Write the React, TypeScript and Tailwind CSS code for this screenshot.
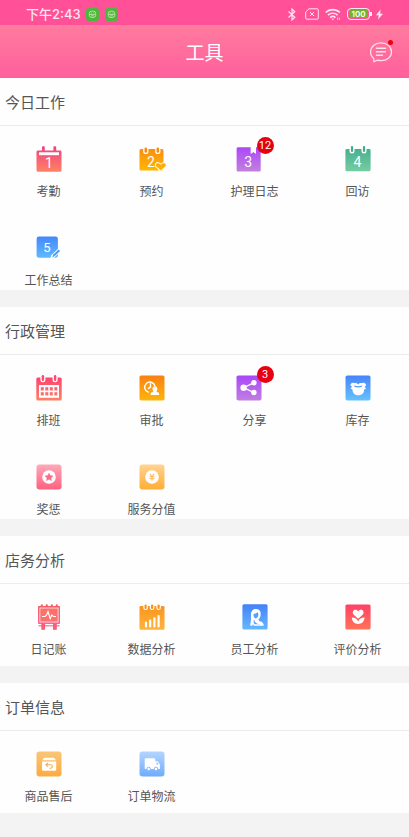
import { ReactNode } from 'react';

interface Tool {
  label: string;
  icon: ReactNode;
  badge?: number;
}

interface Section {
  title: string;
  tools: Tool[];
}

function Icon({ id, from, to, children }: { id: string; from: string; to: string; children: ReactNode }) {
  return (
    <svg viewBox="0 0 26 26" className="h-[26px] w-[26px] overflow-visible" aria-hidden="true">
      <defs>
        <linearGradient id={id} gradientUnits="userSpaceOnUse" x1="0" y1="0" x2="0" y2="26">
          <stop offset="0" stopColor={from} />
          <stop offset="1" stopColor={to} />
        </linearGradient>
      </defs>
      {children}
    </svg>
  );
}

function Digit({ x, y, size = 14, children }: { x: number; y: number; size?: number; children: ReactNode }) {
  return (
    <text x={x} y={y} fontSize={size} textAnchor="middle" fill="#fff" fontFamily="Roboto, sans-serif">
      {children}
    </text>
  );
}

const AttendanceIcon = () => (
  <Icon id="attendance" from="#ee4280" to="#ff8263">
    <path
      fill="url(#attendance)"
      d="M6 1.200c0-.7.5-1 1.400-1s1.400.3 1.400 1v3.300h8.600V1.200c0-.7.5-1 1.400-1s1.400.3 1.400 1v3.300h3.800c.9 0 1.500.6 1.500 1.500v18c0 1.100-.6 1.800-1.600 1.800H2.100C1.100 25.800.5 25.100.5 24V6c0-.9.6-1.500 1.500-1.500h4z"
    />
    <rect x="3" y="6.300" width="20" height="2.900" fill="#fff" />
    <Digit x={13} y={22}>1</Digit>
  </Icon>
);

const BookingIcon = () => (
  <Icon id="booking" from="#f88a14" to="#ffb900">
    <rect x=".5" y="3" width="24" height="21.500" rx="1.500" fill="url(#booking)" />
    <rect x="4.200" y=".4" width="5.200" height="7.600" rx="2.600" fill="#fff" />
    <rect x="16.200" y=".4" width="5.200" height="7.600" rx="2.600" fill="#fff" />
    <rect x="5.500" y="1.500" width="2.600" height="5.200" rx="1.300" fill="#f88a14" />
    <rect x="17.500" y="1.500" width="2.600" height="5.200" rx="1.300" fill="#f88a14" />
    <Digit x={12} y={21}>2</Digit>
    <path
      d="M21.800 24.500l-4.400-3.900c-1.500-1.500-.2-3.900 1.900-3.400 1 .2 1.900.9 2.500 1.600.6-.7 1.500-1.400 2.500-1.600 2.100-.5 3.400 1.900 1.900 3.400z"
      fill="url(#booking)"
      stroke="#fff"
      strokeWidth="2"
      paintOrder="stroke"
    />
  </Icon>
);

const DiaryIcon = () => (
  <Icon id="diary" from="#aa45fa" to="#c381dd">
    <path
      fill="url(#diary)"
      d="M2.200 1.200h12.600v6.500l2.500-1.800 2.500 1.800V1.200h3.500c.9 0 1.400.6 1.400 1.400v21.300c0 1-.6 1.600-1.500 1.600H2.200c-1 0-1.600-.6-1.600-1.600V2.800c0-1 .6-1.600 1.600-1.600z"
    />
    <path fill="#fff" d="M14.800 0h5v7.700l-2.500-1.900-2.500 1.900z" />
    <Digit x={12.300} y={21}>3</Digit>
  </Icon>
);

const VisitIcon = () => (
  <Icon id="visit" from="#3fae8a" to="#78cda4">
    <rect x=".4" y="3" width="25.200" height="22.300" rx="1.500" fill="url(#visit)" />
    <rect x="4.500" y=".4" width="5" height="7.200" rx="2.500" fill="#fff" />
    <rect x="16.500" y=".4" width="5" height="7.200" rx="2.500" fill="#fff" />
    <rect x="5.900" y="0" width="2.200" height="6" rx="1.100" fill="#3fae8a" />
    <rect x="17.900" y="0" width="2.200" height="6" rx="1.100" fill="#3fae8a" />
    <Digit x={12.500} y={21}>4</Digit>
  </Icon>
);

const SummaryIcon = () => (
  <Icon id="summary" from="#4483fa" to="#62c2ff">
    <rect x=".6" y="1.500" width="21.300" height="21.300" rx="2.400" fill="url(#summary)" />
    <Digit x={11} y={17.300} size={13}>5</Digit>
    <path d="M13.500 25l1.900-4.700 7.400-7.200 2.700 2.600-7.500 7z" fill="#fff" />
    <path d="M16.200 22.400l.9-2.600 5.500-5.300 1.500 1.500-5.400 5.100z" fill="#4f9bf8" />
  </Icon>
);

const ScheduleIcon = () => (
  <Icon id="schedule" from="#ff3c70" to="#fd8465">
    <rect x=".3" y="2.600" width="25.400" height="23" rx="1.500" fill="url(#schedule)" />
    <rect x="4.400" y="-.5" width="5" height="7.800" rx="2.500" fill="#fff" />
    <rect x="16.600" y="-.5" width="5" height="7.800" rx="2.500" fill="#fff" />
    <rect x="5.700" y="0" width="2.400" height="6" rx="1.200" fill="#fd4872" />
    <rect x="17.900" y="0" width="2.400" height="6" rx="1.200" fill="#fd4872" />
    <rect x="3" y="10" width="20" height="12.800" fill="#fff" />
    {[12.200, 17.200].map((y) =>
      [4.800, 9.300, 13.800, 18.300].map((x) => (
        <rect key={`${x}-${y}`} x={x} y={y} width="3" height="3.300" fill="url(#schedule)" />
      ))
    )}
  </Icon>
);

const ApprovalIcon = () => (
  <Icon id="approval" from="#f97f12" to="#ffb60a">
    <rect x=".5" y=".4" width="25" height="25.200" rx="1.800" fill="url(#approval)" />
    <path
      d="M9.200 17.200a5.200 5.200 0 1 1 6.700-6.300M11.500 8.800v3.300l-2 1.300"
      fill="none"
      stroke="#fff"
      strokeWidth="1.400"
      strokeLinecap="round"
    />
    <path
      fill="#fff"
      d="M15.900 11.300a2.500 2.500 0 0 1 2.300 3.500c-.4.8-.7 1.200-.5 1.900.2.500.8.700 1.700.9.500.1.700.4.700.8v1.600h-8.400v-1.600c0-.4.300-.7.700-.8.900-.2 1.500-.4 1.700-.9.200-.7-.1-1.100-.5-1.900a2.500 2.500 0 0 1 2.300-3.500z"
    />
  </Icon>
);

const ShareIcon = () => (
  <Icon id="share" from="#aa45fa" to="#c180e0">
    <rect x=".5" y=".4" width="25" height="25.200" rx="1.800" fill="url(#share)" />
    <path d="M17.700 7.800L7.600 12.700l10.100 4.800" fill="none" stroke="#fff" strokeWidth="1.300" />
    <circle cx="7.600" cy="12.700" r="3.200" fill="#fff" />
    <circle cx="17.900" cy="7.800" r="2.700" fill="#fff" />
    <circle cx="17.900" cy="17.500" r="2.700" fill="#fff" />
  </Icon>
);

const StockIcon = () => (
  <Icon id="stock" from="#4683fa" to="#66c3ff">
    <rect x=".5" y=".4" width="25" height="25.200" rx="1.800" fill="url(#stock)" />
    <path
      fill="#fff"
      d="M6.900 7.700l5 .6 1.300 1.200 1.300-1.200 5-.6 1.800 2.300-1.800 1.900 1.700 1.300-2.100 1.600c.1 3.400-2.300 5.500-5.800 5.500s-5.900-2.100-5.700-5.500l-2.200-1.600 1.700-1.300-1.900-1.900z"
    />
    <path d="M8.500 10.500l4.600.7 4.700-.7-1.600 1.500-3.100.4-3.200-.4z" fill="#5299fb" />
  </Icon>
);

const RewardIcon = () => (
  <Icon id="reward" from="#ffaabb" to="#fd5f7e">
    <rect x=".5" y=".4" width="25" height="25.200" rx="3" fill="url(#reward)" />
    <circle cx="13" cy="13" r="6.800" fill="#fff" />
    <path
      d="M13 9.200l1.200 2.400 2.700.4-1.900 1.900.4 2.700-2.400-1.300-2.400 1.300.4-2.700L9.100 12l2.700-.4z"
      fill="#fb6b88"
      stroke="#fb6b88"
      strokeWidth=".5"
      strokeLinejoin="round"
    />
  </Icon>
);

const ScoreIcon = () => (
  <Icon id="score" from="#ffd494" to="#ffac34">
    <rect x=".5" y=".4" width="25" height="25.200" rx="3" fill="url(#score)" />
    <circle cx="13" cy="13" r="6.800" fill="#fff" />
    <path d="M10.800 9.800l2.200 2.700 2.200-2.700M13 12.500v4.300M10.500 12.700h5M10.500 14.700h5" fill="none" stroke="#ffb956" strokeWidth="1.100" />
  </Icon>
);

const LedgerIcon = () => (
  <Icon id="ledger" from="#fb5b62" to="#fa6aa0">
    <rect x="2" y="2" width="22" height="18" rx="1" fill="url(#ledger)" />
    {[4.800, 9.800, 14.800, 19.800].map((x) => (
      <rect key={x} x={x} y=".2" width="2" height="3.200" rx="1" fill="#fb5b62" />
    ))}
    <rect x="3.900" y="4" width="18.200" height="14" fill="#fd706b" stroke="#fff" strokeWidth=".7" />
    <path d="M6 12.500h3l1.500-1.300 1.500-3.700 2.200 7.200 1.600-3.700 1.500 1.500H20" fill="none" stroke="#fff" strokeWidth="1.100" />
    <path d="M2.500 21.800h21" stroke="#f979a8" strokeWidth="1.300" />
    <rect x="5.300" y="19.200" width="3.800" height="6.600" fill="#f85f78" />
    <rect x="17" y="19.200" width="3.800" height="6.600" fill="#f85f78" />
  </Icon>
);

const DataIcon = () => (
  <Icon id="data" from="#f9921c" to="#ffb43c">
    <rect x=".5" y="2" width="25" height="23.700" rx="1.300" fill="url(#data)" />
    {[4.300, 10.800, 17.300].map((x) => (
      <g key={x}>
        <rect x={x} y="-.4" width="4.600" height="6.500" rx="2.300" fill="#fff" />
        <rect x={x + 1.200} y=".5" width="2.200" height="4.500" rx="1.100" fill="#f9921c" />
      </g>
    ))}
    <path
      d="M7 18.700v3.800M11.200 16.500v6M15.400 14.300v8.200M19.600 12v10.500"
      stroke="#fff"
      strokeWidth="2.200"
      strokeLinecap="round"
    />
  </Icon>
);

const StaffIcon = () => (
  <Icon id="staff" from="#4380fa" to="#66b9ff">
    <rect x=".4" y=".2" width="25.200" height="25.400" rx="1.600" fill="url(#staff)" />
    <path
      fill="#fff"
      d="M13.800 4.900c3.600 0 5 2.300 4.900 5 0 2.200-.7 4.100-2 5.200-.3 1.200.3 1.800 1.800 2.300 2 .7 3.200 1.800 3.300 4.400h-9.700l-1.300-1.600-.5 1.800-2.300-.8c1-2.700 1.100-6.500.9-10.100 0-3.500 1.500-6.200 4.900-6.200z"
    />
    <path
      d="M11.400 10c1.700-.2 3.300-1 4.200-2.100.8 1.300 1 2.600.5 4-.5 1.500-1.400 2.500-2.400 2.500-1.300 0-2.300-1.800-2.300-4.400zM12.200 15.500c.3 2 1.200 3.400 3.200 4.300l3.200.5h-5.800c-1.600-1.300-1.300-3.300-.6-4.800z"
      fill="#5a9ffb"
    />
  </Icon>
);

const ReviewIcon = () => (
  <Icon id="review" from="#ff4168" to="#ff7358">
    <rect x=".4" y=".4" width="25.200" height="25.200" rx="1.600" fill="url(#review)" />
    <path
      fill="#fff"
      d="M13.200 14.700l-4.400-4c-2-2.200-.7-5 1.700-5 1.200 0 2.200.7 2.700 1.700.5-1 1.500-1.700 2.700-1.700 2.400 0 3.700 2.800 1.700 5z"
    />
    <path fill="#fff" d="M6.800 13.600c3.100 0 5.400 1.300 6.400 3.900 1-2.600 3.300-3.900 6.400-3.900-.2 3.800-2.700 6.400-6.400 6.400s-6.200-2.600-6.400-6.400z" />
  </Icon>
);

const AfterSaleIcon = () => (
  <Icon id="aftersale" from="#f9c679" to="#feaa3f">
    <rect x=".5" y=".4" width="25" height="25.200" rx="3" fill="url(#aftersale)" />
    <path fill="#fff" d="M8.200 6.800h9.800l2 2.500H6.200zM6 10.400h14.200v8.200c0 .8-.4 1.200-1.200 1.200H7.200c-.8 0-1.200-.4-1.200-1.200z" />
    <path
      d="M12 11.900l-2.200 1.900 2.200 1.800M10 13.800h4.300c2.800 0 2.800 3.400.2 3.400h-1"
      fill="none"
      stroke="#fcae4c"
      strokeWidth="1.100"
    />
  </Icon>
);

const LogisticsIcon = () => (
  <Icon id="logistics" from="#b5d5ff" to="#6dacfb">
    <rect x=".5" y=".4" width="25" height="25.200" rx="3" fill="url(#logistics)" />
    <path fill="#fff" d="M6.500 7.200h8.900c.5 0 .8.300.8.800v10H6.500c-.5 0-.8-.3-.8-.8V8c0-.5.3-.8.800-.8zM16.200 10.300h2.500l2.200 3.300v4.400h-4.700z" />
    <path d="M17.500 11.600h.8l1.200 1.900h-2z" fill="#83b9fc" />
    <circle cx="9.700" cy="18" r="1.800" fill="#fff" stroke="#7bb4fc" strokeWidth=".9" />
    <circle cx="17" cy="18" r="1.800" fill="#fff" stroke="#7bb4fc" strokeWidth=".9" />
  </Icon>
);

const sections: Section[] = [
  {
    title: '今日工作',
    tools: [
      { label: '考勤', icon: <AttendanceIcon /> },
      { label: '预约', icon: <BookingIcon /> },
      { label: '护理日志', icon: <DiaryIcon />, badge: 12 },
      { label: '回访', icon: <VisitIcon /> },
      { label: '工作总结', icon: <SummaryIcon /> },
    ],
  },
  {
    title: '行政管理',
    tools: [
      { label: '排班', icon: <ScheduleIcon /> },
      { label: '审批', icon: <ApprovalIcon /> },
      { label: '分享', icon: <ShareIcon />, badge: 3 },
      { label: '库存', icon: <StockIcon /> },
      { label: '奖惩', icon: <RewardIcon /> },
      { label: '服务分值', icon: <ScoreIcon /> },
    ],
  },
  {
    title: '店务分析',
    tools: [
      { label: '日记账', icon: <LedgerIcon /> },
      { label: '数据分析', icon: <DataIcon /> },
      { label: '员工分析', icon: <StaffIcon /> },
      { label: '评价分析', icon: <ReviewIcon /> },
    ],
  },
  {
    title: '订单信息',
    tools: [
      { label: '商品售后', icon: <AfterSaleIcon /> },
      { label: '订单物流', icon: <LogisticsIcon /> },
    ],
  },
];

function RobotIcon() {
  return (
    <svg viewBox="0 0 13 13" className="h-[13px] w-[13px]" aria-hidden="true">
      <rect width="13" height="13" rx="3" fill="#4fb53c" />
      <rect x="3.300" y="3.200" width="6.400" height="6.300" rx="2.200" fill="none" stroke="#c4ecb4" strokeWidth=".8" />
      <path d="M3.300 6.400h6.400M4.800 4.900h.8M7.400 4.900h.8M5 7.900h3" stroke="#c4ecb4" strokeWidth=".8" />
    </svg>
  );
}

function StatusBar() {
  return (
    <div className="flex h-[25px] items-center justify-between bg-[#ff5098] pt-[3px] pr-[26px] pl-[26px] text-[#ffe6f0]">
      <div className="flex items-center">
        <span className="mr-[5px] font-[Inter,'Noto_Sans_CJK_SC',sans-serif] text-[13px] leading-5 font-medium">下午2:43</span>
        <div className="flex gap-[6px]">
          <RobotIcon />
          <RobotIcon />
        </div>
      </div>
      <div className="flex items-center">
        <svg viewBox="0 0 8 13" className="mr-[9px] h-[13px] w-2" fill="none" stroke="currentColor" strokeWidth="1.200" aria-hidden="true">
          <path d="M.5 3.500l6.300 5.800L4 12V1l2.800 2.700L.5 9.500" />
        </svg>
        <svg viewBox="0 0 14 12" className="mr-[6px] h-3 w-[14px]" fill="none" stroke="currentColor" strokeWidth="1" aria-hidden="true">
          <path d="M4 .8h8c.8 0 1.300.5 1.300 1.300v7.800c0 .8-.5 1.300-1.300 1.300H2c-.8 0-1.300-.5-1.300-1.300V4zM5 4l4 4M9 4L5 8" />
        </svg>
        <svg viewBox="0 0 16 13" className="mr-[6px] h-[13px] w-4" fill="none" stroke="currentColor" strokeWidth="1.600" aria-hidden="true">
          <path d="M.7 4.500c4-3.900 10.200-3.900 14.200 0M3 7.200c2.800-2.600 6.800-2.600 9.600 0M5.200 9.600c1.500-1.400 3.700-1.400 5.200 0" />
          <path d="M7.800 12.300L6.300 10.800h3z" fill="currentColor" stroke="none" />
          <path d="M12.500 12v-2.500M14.300 9.500V12" strokeWidth="1" opacity=".7" />
        </svg>
        <div className="flex h-3 w-[23px] items-center justify-center rounded-[4px] border border-[#ffe6f0] p-px">
          <span className="flex h-2 w-full items-center justify-center rounded-[2px] bg-[#6fb52c] font-[Inter,sans-serif] text-[8px] leading-none font-semibold text-white">
            100
          </span>
        </div>
        <span className="mr-1 h-1 w-[2px] bg-[#ffe6f0]" />
        <svg viewBox="0 0 7 11" className="h-[11px] w-[7px]" fill="currentColor" aria-hidden="true">
          <path d="M4.500.5L0 6.200h2.700L2 10.500 7 4.700H4.200z" />
        </svg>
      </div>
    </div>
  );
}

function Header() {
  return (
    <header className="grid h-[53px] grid-cols-[1fr_auto_1fr] items-center bg-linear-to-b from-[#ff7b9f] to-[#ff5f9c] px-4">
      <h1 className="col-start-2 text-[19px] leading-6 font-normal text-white">工具</h1>
      <button aria-label="消息" className="relative justify-self-end">
        <svg viewBox="0 0 24 22" className="h-[22px] w-6" fill="none" stroke="#ffe3ec" strokeWidth="1.200" strokeLinecap="round" strokeLinejoin="round" aria-hidden="true">
          <path d="M4.800 20.800V17.400C2.800 15.900 1.600 13.500 1.600 10.900 1.600 5.800 6.100 1.800 12 1.800s10.500 3.900 10.500 9.100S18 19.600 12 19.600c-1.300 0-2.400-.1-3.500-.5z" />
          <path d="M7.500 7.200h9M7.500 10.700h9M7.500 14.200h6" strokeWidth="1.400" />
        </svg>
        <span className="absolute -top-px right-0 h-[5px] w-[5px] rounded-full bg-[#ee0010]" />
      </button>
    </header>
  );
}

function ToolButton({ tool }: { tool: Tool }) {
  return (
    <button className="flex flex-col items-center gap-[9px] pt-5">
      <span className={tool.badge ? 'relative pr-3' : 'relative'}>
        {tool.icon}
        {tool.badge && (
          <span className="absolute -top-[9px] right-0 flex h-[17px] w-[17px] items-center justify-center rounded-full bg-[#e60012] font-[Roboto,sans-serif] text-[11px] leading-none text-white">
            {tool.badge}
          </span>
        )}
      </span>
      <span className="text-[12px] leading-5 text-[#555]">{tool.label}</span>
    </button>
  );
}

export default function App() {
  return (
    <div className="min-h-screen bg-[#f3f3f3] font-['Noto_Sans_CJK_SC',sans-serif]">
      <StatusBar />
      <Header />
      <main className="flex flex-col gap-[17px]">
        {sections.map((section) => (
          <section key={section.title} className="bg-[#fefefe]">
            <h2 className="border-b border-[#ececec] px-[5px] pt-3 pb-[11px] text-[15px] leading-6 text-[#555]">
              {section.title}
            </h2>
            <div
              className={
                section.tools.length > 4
                  ? '-ml-[3px] grid grid-cols-4 gap-y-[14px]'
                  : '-ml-[3px] grid grid-cols-4 pb-[7px]'
              }
            >
              {section.tools.map((tool) => (
                <ToolButton key={tool.label} tool={tool} />
              ))}
            </div>
          </section>
        ))}
      </main>
    </div>
  );
}
